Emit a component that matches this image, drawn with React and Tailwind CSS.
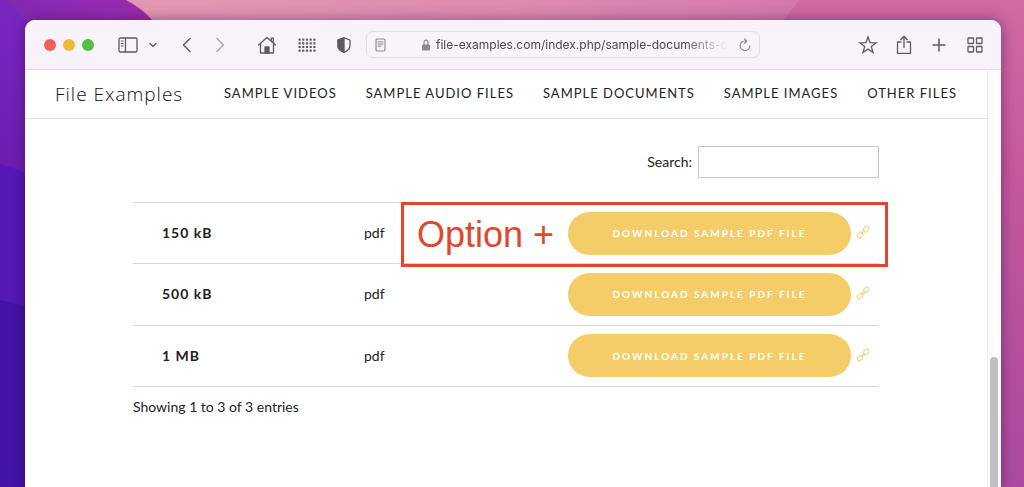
import React, { useState } from "react";

const NAV_LINKS = [
  "SAMPLE VIDEOS",
  "SAMPLE AUDIO FILES",
  "SAMPLE DOCUMENTS",
  "SAMPLE IMAGES",
  "OTHER FILES",
];

const FILES = [
  { size: "150 kB", type: "pdf" },
  { size: "500 kB", type: "pdf" },
  { size: "1 MB", type: "pdf" },
];

function Wallpaper() {
  return (
    <svg
      className="absolute inset-0 w-full h-full"
      viewBox="0 0 1024 487"
      preserveAspectRatio="none"
      aria-hidden="true"
    >
      <defs>
        <linearGradient id="sky" x1="0" y1="0" x2="1" y2="0">
          <stop offset="0.1" stopColor="#e299b2" />
          <stop offset="0.5" stopColor="#de8bb0" />
          <stop offset="0.8" stopColor="#d277ab" />
        </linearGradient>
        <linearGradient id="hill" x1="0" y1="0" x2="0" y2="1">
          <stop offset="0" stopColor="#d06aa2" />
          <stop offset="0.35" stopColor="#c4599c" />
          <stop offset="1" stopColor="#ab4aa0" />
        </linearGradient>
        <linearGradient id="violet" x1="0" y1="0" x2="1" y2="0">
          <stop offset="0" stopColor="#8028b4" />
          <stop offset="1" stopColor="#9c2cae" />
        </linearGradient>
        <linearGradient id="edge" x1="0" y1="0" x2="0" y2="1">
          <stop offset="0" stopColor="#7a27c0" />
          <stop offset="1" stopColor="#6a1cae" />
        </linearGradient>
      </defs>
      <rect width="1024" height="487" fill="url(#sky)" />
      <path d="M800 0H1024V487H770V50Q784 15 800 0Z" fill="url(#hill)" />
      <path d="M0 0H126Q142 8 154 22V487H0Z" fill="url(#violet)" />
      <path d="M0 0Q20 8 40 40V190H0Z" fill="url(#edge)" />
      <path d="M0 164Q18 168 40 182V320H0Z" fill="#5518b4" />
      <path d="M0 300Q20 304 40 312V487H0Z" fill="#4213a5" />
    </svg>
  );
}

function Icon({ className, viewBox, children }) {
  return (
    <svg
      className={className}
      viewBox={viewBox}
      fill="none"
      stroke="currentColor"
      strokeWidth="1.3"
      strokeLinecap="round"
      strokeLinejoin="round"
      aria-hidden="true"
    >
      {children}
    </svg>
  );
}

function Toolbar() {
  return (
    <header className="flex items-center h-[50px] pl-[19px] pr-[18px] bg-[#f8f3fa] border-b border-[#e3dfe5] rounded-t-[10px] text-[#5d5a60]">
      <div className="flex gap-[7px] shrink-0">
        <button aria-label="Close" className="size-3 rounded-full bg-[#ec6059]" />
        <button aria-label="Minimize" className="size-3 rounded-full bg-[#f0b83e]" />
        <button aria-label="Zoom" className="size-3 rounded-full bg-[#55bd46]" />
      </div>

      <button aria-label="Sidebar" className="ml-6 shrink-0">
        <Icon className="w-5 h-4" viewBox="0 0 20 16">
          <rect x="1" y="1" width="18" height="14" rx="1.5" />
          <path d="M7.5 1v14" />
          <path d="M3.2 4h2M3.2 6.5h2M3.2 9h2" strokeWidth="1" />
        </Icon>
      </button>
      <button aria-label="Tab groups" className="ml-[11px] shrink-0">
        <Icon className="w-2 h-2" viewBox="0 0 8 8">
          <path d="M1 2.5 4 5.5 7 2.5" />
        </Icon>
      </button>
      <button aria-label="Back" className="ml-6 shrink-0">
        <Icon className="w-3 h-4" viewBox="0 0 12 16">
          <path d="M9 1.5 2.5 8 9 14.5" strokeWidth="1.5" />
        </Icon>
      </button>
      <button aria-label="Forward" className="ml-5 shrink-0 text-[#aaa6ae]">
        <Icon className="w-3 h-4" viewBox="0 0 12 16">
          <path d="M4 1.5 10.5 8 4 14.5" strokeWidth="1.5" />
        </Icon>
      </button>
      <button aria-label="Home" className="ml-8 shrink-0">
        <Icon className="w-5 h-5" viewBox="0 0 20 20">
          <path d="M1.5 10 10 2.5 18.5 10M3.5 8.5V18h13V8.5M14.3 5.8V3.2h2v4.5" />
          <path d="M8 18v-6h4v6z" fill="currentColor" />
        </Icon>
      </button>
      <button aria-label="Apps" className="ml-5 shrink-0">
        <Icon className="w-5 h-4" viewBox="0 0 20 16">
          {[2.5, 6.2, 9.9, 13.6, 17.3].map((x) =>
            [2.5, 6.2, 9.9, 13.6].map((y) => (
              <rect key={`${x}-${y}`} x={x - 1} y={y - 1} width="2.2" height="2.2" rx="0.4" fill="currentColor" stroke="none" />
            ))
          )}
        </Icon>
      </button>
      <button aria-label="Privacy report" className="ml-5 shrink-0">
        <Icon className="w-[14px] h-4" viewBox="0 0 14 16">
          <path d="M7 .8 13 3v6c0 3-3 5-6 6.3C4 14 1 12 1 9V3z" />
          <path d="M7 .8v14.5C4 14 1 12 1 9V3z" fill="currentColor" />
        </Icon>
      </button>

      {/* Address bar */}
      <div className="flex items-center flex-1 min-w-0 h-[27px] ml-[15px] px-2 rounded-[7px] border border-[#e3dde6] bg-[#faf3fb]">
        <button aria-label="Reader" className="shrink-0 text-[#88848b]">
          <Icon className="w-[11px] h-[14px]" viewBox="0 0 11 14">
            <rect x="1" y="1" width="9" height="12" rx="1.2" strokeWidth="1.1" />
            <path d="M3 3.8h5M3 6h5M3 8.2h3" strokeWidth="1" />
          </Icon>
        </button>
        <svg className="w-2 h-3 ml-9 shrink-0 text-[#8d8990]" viewBox="0 0 8 12" fill="none" aria-hidden="true">
          <path d="M2 6V3.5a2 2.3 0 0 1 4 0V6" stroke="currentColor" strokeWidth="1.2" />
          <rect y="5.5" width="8" height="6" rx="1" fill="currentColor" />
        </svg>
        <input
          type="text"
          aria-label="Address"
          readOnly
          value="file-examples.com/index.php/sample-documents-download"
          className="flex-1 min-w-0 ml-[6px] mr-3 bg-transparent outline-none font-[Inter,sans-serif] text-xs text-[#4b474e] mask-r-from-85% mask-r-to-100%"
        />
        <button aria-label="Reload" className="shrink-0 text-[#88848b]">
          <Icon className="w-3 h-[14px]" viewBox="0 0 12 14">
            <path d="M10.8 7.8A4.8 4.8 0 1 1 6 3h1.5M5.5.8 7.8 3 5.5 5.3" strokeWidth="1.1" />
          </Icon>
        </button>
      </div>

      <button aria-label="Bookmark" className="ml-[98px] shrink-0">
        <Icon className="w-5 h-5" viewBox="0 0 20 20">
          <path d="m10 2 2.1 5.7 6 .2-4.800 3.700 1.700 5.900L10 14.100l-5 3.400 1.700-5.900L1.900 7.900l6-.2z" strokeLinejoin="miter" />
        </Icon>
      </button>
      <button aria-label="Share" className="ml-[17px] shrink-0">
        <Icon className="w-[18px] h-5" viewBox="0 0 18 20">
          <path d="M6 7H2.5v11.3h13V7H12M9 12.5V1.5M5.8 4.5 9 1.3l3.2 3.2" />
        </Icon>
      </button>
      <button aria-label="New tab" className="ml-[19px] shrink-0">
        <Icon className="w-[14px] h-[14px]" viewBox="0 0 14 14">
          <path d="M7 1v12M1 7h12" strokeWidth="1.5" />
        </Icon>
      </button>
      <button aria-label="Tab overview" className="ml-[21px] shrink-0">
        <Icon className="w-4 h-4" viewBox="0 0 16 16">
          <rect x="1" y="1" width="5.5" height="5.5" rx=".5" />
          <rect x="9.5" y="1" width="5.5" height="5.5" rx=".5" />
          <rect x="1" y="9.5" width="5.5" height="5.5" rx=".5" />
          <rect x="9.5" y="9.5" width="5.5" height="5.5" rx=".5" />
        </Icon>
      </button>
    </header>
  );
}

function LinkIcon() {
  return (
    <svg
      className="w-4 h-4"
      viewBox="0 0 16 16"
      fill="none"
      stroke="currentColor"
      strokeWidth="1"
      strokeLinecap="round"
      aria-hidden="true"
    >
      <g transform="rotate(-45 8 7)">
        <rect x="0.500" y="5" width="6.500" height="4.200" rx="2.100" />
        <rect x="9" y="5" width="6.500" height="4.200" rx="2.100" />
        <path d="M5.500 7.100h5" />
      </g>
    </svg>
  );
}

export default function App() {
  const [search, setSearch] = useState("");

  return (
    <div className="relative flex min-h-screen pt-5 pl-[25px] pr-[23px] overflow-hidden">
      <Wallpaper />

      {/* Browser window */}
      <div className="relative flex flex-col flex-1 min-w-0 bg-white rounded-t-[10px] shadow-[0_0_14px_rgba(40,0,60,0.45)]">
        <Toolbar />

        <div className="flex flex-1">
          <div className="flex-1 min-w-0 font-[Lato,sans-serif] text-[#222]">
            <nav className="flex items-center justify-between h-[49px] px-[30px] border-b border-[#e4e4e4] whitespace-nowrap">
              <a href="#" className="font-['Open_Sans',sans-serif] font-light text-[19px] tracking-[1px] text-[#111]">
                File Examples
              </a>
              <div className="flex gap-[29px]">
                {NAV_LINKS.map((label) => (
                  <a key={label} href="#" className="text-[13px] tracking-[1px]">
                    {label}
                  </a>
                ))}
              </div>
            </nav>

            <main className="w-full max-w-[746px] mx-auto pt-[27px] text-sm">
              <div className="flex items-center justify-end gap-[6px]">
                <label htmlFor="search">Search:</label>
                <input
                  id="search"
                  type="text"
                  value={search}
                  onChange={(e) => setSearch(e.target.value)}
                  className="w-[181px] h-8 px-2 border border-[#c8c8c8] bg-white outline-none"
                />
              </div>

              <div className="relative mt-6">
                <table className="w-full h-[185px] table-fixed border-collapse">
                  <colgroup>
                    <col className="w-[231px]" />
                    <col className="w-[204px]" />
                    <col />
                  </colgroup>
                  <tbody>
                    {FILES.map((file) => (
                      <tr key={file.size} className="border-y border-[#d6d6d6]">
                        <td className="pl-[29px] font-bold tracking-[1px]">{file.size}</td>
                        <td>{file.type}</td>
                        <td>
                          <div className="flex items-center gap-1">
                            <button className="w-[283px] h-[43px] rounded-full bg-[#f4cd68] text-white text-[10px] font-bold tracking-[2px] whitespace-nowrap">
                              DOWNLOAD SAMPLE PDF FILE
                            </button>
                            <a href="#" aria-label={`Link to ${file.size} file`} className="text-[#f0cf78]">
                              <LinkIcon />
                            </a>
                          </div>
                        </td>
                      </tr>
                    ))}
                  </tbody>
                </table>

                {/* Callout over the first row */}
                <div className="absolute top-0 left-[268px] -right-[9px] h-[65px] flex items-center pl-[13px] border-3 border-[#e2472d] pointer-events-none">
                  <span className="font-['Liberation_Sans',sans-serif] text-4xl text-[#e2472d]">Option +</span>
                </div>
              </div>

              <p className="mt-[10px]">Showing 1 to 3 of 3 entries</p>
            </main>
          </div>

          {/* Scrollbar */}
          <div className="flex flex-col w-[14px] px-[2px] border-l border-[#ececec] bg-[#fcfcfc]">
            <div className="grow-[287]" />
            <div className="grow-[130] w-2 rounded-t-full bg-[#bfbfbf]" />
          </div>
        </div>
      </div>
    </div>
  );
}
